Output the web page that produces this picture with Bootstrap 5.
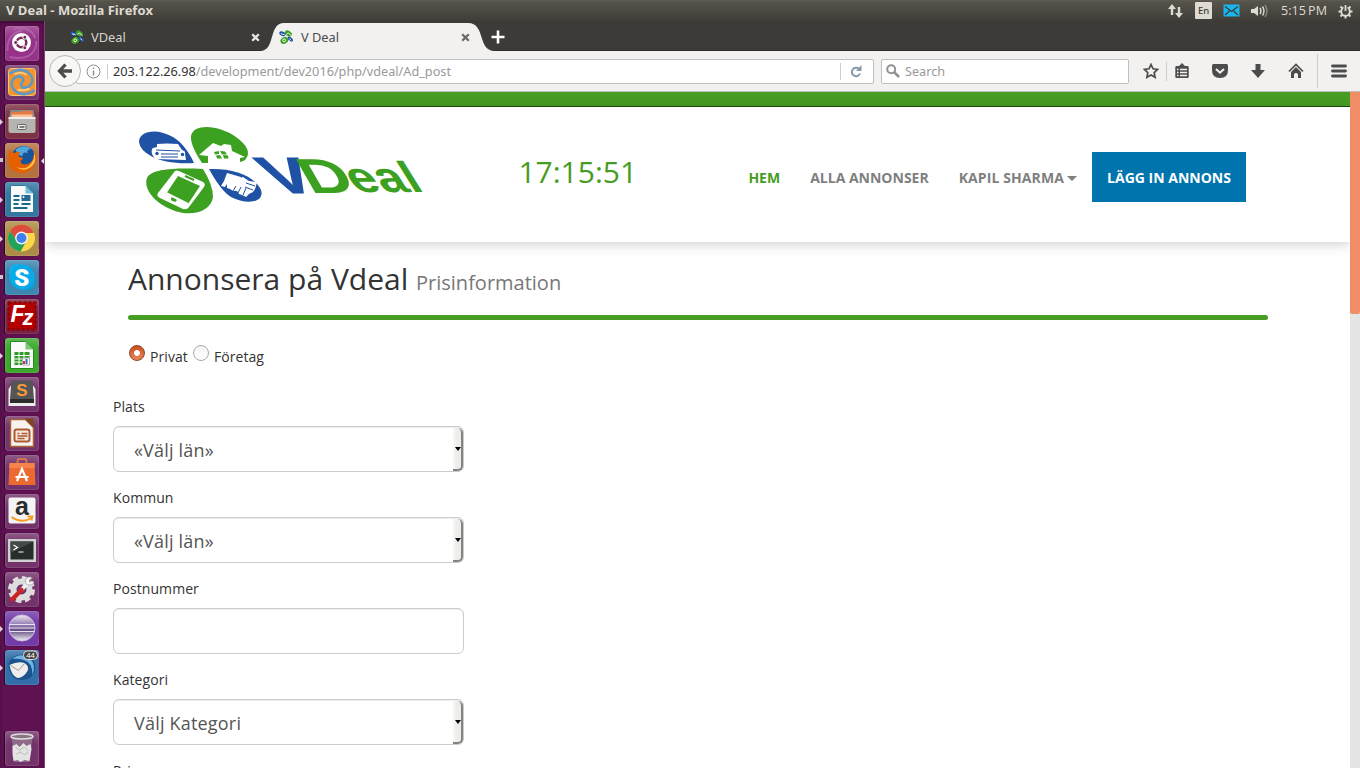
<!DOCTYPE html>
<html lang="sv">
<head>
<meta charset="utf-8">
<title>V Deal</title>
<link rel="stylesheet" href="https://cdn.jsdelivr.net/npm/bootstrap@5.3.0/dist/css/bootstrap.min.css">
<script src="https://cdn.jsdelivr.net/npm/bootstrap@5.3.0/dist/js/bootstrap.bundle.min.js"></script>
<style>
html,body{height:768px;overflow:hidden}
body{font-family:"Open Sans","Noto Sans",sans-serif;font-size:14px;line-height:20px;color:#333;background:#fff}
svg{display:block;flex:none}
.syspanel{height:21px;background:linear-gradient(#5e5b50 0,#55534a 2px,#3e3d38 100%);color:#dfdbd2;font-size:12.6px;line-height:20px}
.wintitle{font-weight:700;font-size:13px;padding-left:6px}
.indicators{padding-right:7px}
.desk{height:747px}
.launcher{width:45px;background:#5f1152;border-right:1px solid #7f4574;padding:5px 0 2px 5px;box-shadow:inset 0 3px 4px -1px #3d0934}
.launcher>.lt{width:34px;height:35px;margin-bottom:4px;border-radius:3px;position:relative;box-shadow:inset 0 0 0 1px #ffffff1a,inset 0 9px 9px -4px #ffffff38,-1px 0 1px #2a0624;background:#73336a}
.launcher>.lt.mt-auto{margin-bottom:0}
.lt>svg{width:34px;height:35px}
.run::before{content:"";position:absolute;left:-5px;top:15px;border:3px solid transparent;border-left-color:#dcd2da;border-right:0}
.runs::before{content:"";position:absolute;left:-5px;top:15px;width:3px;height:4px;background:#cfc4cd}
.run::after,.runs::after{content:"";position:absolute;right:0;top:8px;width:1px;height:20px;background:#0003}
.foc::after{right:-5px;top:15px;width:0;height:0;background:none;border:3px solid transparent;border-right-color:#e8e0e6;border-left:0}
.t-dash{background:#96328a!important}.t-files{background:#7d3144!important}.t-fox{background:#b4723f!important}.t-writer{background:#3477a0!important}.t-chrome{background:#ad8c47!important}.t-skype{background:#3c86b0!important}.t-fz{background:#7a2040!important}.t-calc{background:#3ba82c!important}.t-ecl{background:#723ba8!important}.t-bird{background:#316eaa!important}
.browser{width:1315px;font-family:"Noto Sans","Open Sans",sans-serif}
.tabstrip{height:30px;background:#3c3b37;border-bottom:1px solid #2b2d2e;font-size:12.8px;line-height:30px}
.tabone{width:215px;padding:3px 0 0 25px;color:#d7d3cc}
.tabtwo{width:234px;padding:3px 16px 0 19px;position:relative;color:#4c4c4c}
.tabtwo .shape{position:absolute;left:0;top:1px}
.tabtwo>*{position:relative}
.urlrow{height:41px;background:#f2f1f0;border-bottom:1px solid #c2c0bd}
.backbtn{width:32px;height:32px;border:1px solid #b8b6b3;border-radius:50%;background:#f7f7f6;z-index:2}
.urlbox{height:25px;width:798px;margin-left:-5px;border:1px solid #c1bfbc;border-radius:2px;background:#fff;font-size:12.7px;color:#999}
.urlbox b{font-weight:400;color:#333}
.urltext,.findbox span{padding-bottom:1px}
.findbox{width:248px;height:25px;border:1px solid #c1bfbc;border-radius:2px;background:#fff;font-size:12.67px;color:#999;margin-left:7px}
.vline{width:1px;background:#cfcdcb;height:19px}
.page{height:676px;overflow:hidden;font-family:"Open Sans",sans-serif}
.sitewrap{width:1305px;overflow:hidden}
.greenbar{height:15px;background:#479c23;border-bottom:1px solid #1d4a0c}
.sitehead{height:135px;box-shadow:0 2px 12px #0003;background:#fff;position:relative;padding-right:104px}
.clocktext{font-size:30px;line-height:40px;color:#479c23;margin-top:45px;width:230px}
.sitenav{margin-top:45px;font-weight:700;color:#7f7f7f}
.sitenav a{color:#7f7f7f;text-decoration:none;padding:16px 0 14px;white-space:nowrap}
.sitenav a:nth-child(3){letter-spacing:.1px}
.sitenav .cur{color:#479c23}
.sitenav .cta{background:#0074ad;color:#fff;width:154px;text-align:center;height:50px}
.caretdn{display:inline-block;border:5px solid transparent;border-top-color:#7f7f7f;border-bottom:0;vertical-align:middle;margin-left:3px;margin-bottom:1px}
.sitebody{padding:20px 83px 0 68px}
h1{font-size:30px;line-height:33px;font-weight:400;margin:0 0 20px 15px;color:#333;height:33px}
h1 small{font-size:20px;line-height:20px;color:#777}
.ruleline{height:5px;border-radius:3px;background:#479c23;width:1140px;margin-left:15px}
.kinds{margin:24px 0 0 15px;height:30px}
.kinds .form-check-input{width:16px;height:16px;margin:1px 5px 0 1px;border:1px solid #a9a9a9;background:linear-gradient(#f3f3f3,#fff)}
.kinds .form-check-input:checked{background:radial-gradient(circle,#fff 0 2.6px,transparent 3.3px),linear-gradient(#cb4e20,#ea8459);border-color:#8e452b}
.kinds label{margin-top:3px;margin-right:4px;letter-spacing:.07px}
.fields{width:351px;margin-top:23px}
.fields label{display:block;margin-bottom:9px;letter-spacing:.07px}
.fields .form-control{height:46px;border:1px solid #ccc;border-radius:6px;padding:10px 20px;font-size:18px;line-height:26px;color:#555;background:#fff;box-shadow:inset 0 1px 1px #00000013;margin-bottom:16px;appearance:none;letter-spacing:.2px}
.pick{position:relative}
.pick::before{content:"";position:absolute;right:1px;top:2px;width:10px;height:43px;background:linear-gradient(90deg,#fafafa,#ededeb 40%);border-right:2px solid #858380;border-bottom:2px solid #858380;border-radius:0 5px 5px 0}
.pick::after{content:"";position:absolute;right:3px;top:21px;border:3px solid transparent;border-top:4px solid #000;border-bottom:0}
.sbar{width:10px;background:#e5e5e5}
.sbar div{height:222px;background:#f08c66;border-radius:0 0 2px 2px}
</style>
</head>
<body>
<svg width="0" height="0" class="position-absolute"><defs>
<symbol id="fav" viewBox="0 0 16 16"><ellipse cx="3.7" cy="4" rx="3.6" ry="2.3" transform="rotate(24 3.7 4)" fill="#1f52a5"/><path d="M2 4l4 1" stroke="#fff"/><ellipse cx="10" cy="3.7" rx="4" ry="2.8" transform="rotate(30 10 3.7)" fill="#3c9f20"/><path d="M8 5l2-2 3 3" stroke="#fff" fill="none"/><ellipse cx="5.5" cy="11.2" rx="4.2" ry="3.5" transform="rotate(-30 5.5 11)" fill="#3c9f20"/><circle cx="5.5" cy="11" r="1.5" fill="none" stroke="#fff"/><ellipse cx="12" cy="9.7" rx="3.5" ry="1.8" transform="rotate(42 12 9.7)" fill="#1f52a5"/><path d="M11 9l2 2" stroke="#fff"/></symbol>
</defs></svg>
<header class="syspanel d-flex justify-content-between">
 <span class="wintitle">V Deal - Mozilla Firefox</span>
 <div class="indicators d-flex align-items-center">
  <svg width="16" height="16" viewBox="0 0 16 16" fill="#dfdbd2"><path d="M0 6l4-5 4 5H5.2v6H2.8V6zM7 10h2.8V4h2.4v6H15l-4 5z"/></svg>
  <svg width="17" height="17" viewBox="0 0 17 17" style="margin-left:11px"><rect width="17" height="17" rx="1" fill="#dfdbd2"/><text x="8.5" y="12" font-size="9.5" text-anchor="middle" fill="#3c3b37" font-family="Noto Sans" font-weight="500">En</text></svg>
  <svg width="17" height="13" viewBox="0 0 17 13" style="margin-left:11px"><rect x=".5" y=".5" width="16" height="12" fill="#19b6ee"/><path d="M2 2.5l6.500 5 6.500-5M2 11l4.500-4M15 11l-4.500-4" stroke="#3c3b37" stroke-width="1.300" fill="none"/></svg>
  <svg width="17" height="16" viewBox="0 0 17 16" style="margin-left:11px" fill="none" stroke="#dfdbd2" stroke-width="1.400"><path d="M0 6h3l4-3v10L3 10H0z" fill="#dfdbd2" stroke="none"/><path d="M9 5q2 3 0 6M11.500 3.500q3 4.500 0 9"/><path d="M14 2q4 6 0 12" stroke="#8b8981"/></svg>
  <span style="margin-left:13px">5:15&#8201;PM</span>
  <svg width="15" height="16" viewBox="0 0 15 16" style="margin-left:11px" fill="none" stroke="#dfdbd2"><circle cx="7.500" cy="8.500" r="4.300" stroke-width="1.900"/><path d="M7.500 1v7" stroke="#4a4943" stroke-width="4"/><path d="M7.500 2v6" stroke-width="1.800"/><path d="M.5 8.500H3M12 8.500h2.500M2.500 3.500l2 2M12.500 3.500l-2 2M2.500 13.500l2-2M12.500 13.500l-2-2M7.500 13v2.500" stroke-width="1.900"/></svg>
 </div>
</header>
<div class="desk d-flex">
<aside class="launcher d-flex flex-column flex-shrink-0">
 <div class="lt t-dash"><svg viewBox="0 0 33 35"><path d="M2 25Q1 8 17 4M4 31Q30 36 31 15M8 3Q24-1 30 12" fill="none" stroke="#bb77b2" stroke-width="2" opacity=".6"/><circle cx="16" cy="16.500" r="9.500" fill="#fff"/><circle cx="16" cy="16.500" r="4.800" fill="none" stroke="#772953" stroke-width="2.400"/><g stroke="#fff" fill="#772953"><circle cx="10.200" cy="16.500" r="2"/><circle cx="19.300" cy="11.200" r="2"/><circle cx="19.300" cy="21.800" r="2"/></g></svg></div>
 <div class="lt"><svg viewBox="0 0 33 35"><rect x="3" y="3.500" width="27" height="27" rx="3" fill="#f2932e" stroke="#ffc36c"/><path d="M4 9Q13 2 22 7q8 6 3 13-4 4-8 2-3-3 0-5" fill="none" stroke="#5e98c7" stroke-width="2.600"/><path d="M29 25q-9 7-18 2-8-6-3-13 4-4 8-2 3 3 1 5" fill="none" stroke="#5e98c7" stroke-width="2.600"/><path d="M9 9q8-3 12 1M12 24.500q6 2 12-1" stroke="#ffd58c" fill="none" stroke-width="1.500"/></svg></div>
 <div class="lt run t-files"><svg viewBox="0 0 33 35"><path d="M5 6h23l1.500 8H3.500z" fill="#8a8784"/><path d="M6 8h9l2-1h10v7H6z" fill="#e57a42"/><path d="M6 10.500h21V14H6z" fill="#f9c09a"/><rect x="3" y="13" width="27" height="16" rx="2" fill="#b5b4b1"/><path d="M3 14h27" stroke="#eee" stroke-width="2"/><rect x="12" y="20.500" width="8.500" height="5" rx="1" fill="#eee" stroke="#666"/><path d="M14 23h5" stroke="#555" stroke-width="1.500"/></svg></div>
 <div class="lt runs foc t-fox"><svg viewBox="0 0 33 35"><circle cx="18" cy="15" r="12" fill="#16549c"/><path d="M10 7q8-7 16-1-5 0-4 4-5-2-5 3-4 0-7-6" fill="#4fa9dd"/><path d="M4 7q2 3 5 3 3-2 6-1-3 3-1 5l4 1-3 3q1 5 7 3 6-2 6-9 3 4-1 9 4-5 2-14 4 6 0 14-4 9-13 9Q3 29 3 16q-1-5 1-9" fill="#e66000"/><path d="M28 8q5 11-4 17-7 4-13-1 10 4 15-4 4-5 2-12" fill="#ffc34b"/></svg></div>
 <div class="lt run t-writer"><svg viewBox="0 0 33 35"><path d="M5 3.500h15l8 8v19H5z" fill="#fafafa" stroke="#287d9d"/><path d="M20 3.500v8h8z" fill="#75bcd7"/><path d="M8 14h6M8 18h6M8 22h5M8 26h14M16 22h9" stroke="#176987" stroke-width="2"/><rect x="16" y="13" width="9" height="6" fill="#236b94"/><circle cx="18" cy="15" r="1" fill="#fff"/></svg></div>
 <div class="lt run t-chrome"><svg viewBox="0 0 33 35"><circle cx="16" cy="17" r="13.500" fill="#fdd64a"/><path d="M4.300 10.200A13.500 13.500 0 0 1 27.700 10.200L28 12H16l-5.500 7z" fill="#dd4b3e"/><path d="M4.300 10.200A13.500 13.500 0 0 0 15 30.500l6-10.500-10-1z" fill="#22a35b"/><circle cx="16" cy="17" r="6.400" fill="#f6f6f6"/><circle cx="16" cy="17" r="5" fill="#427fec"/></svg></div>
 <div class="lt runs t-skype"><svg viewBox="0 0 33 35"><circle cx="11.500" cy="12" r="8" fill="#16afe9"/><circle cx="21.500" cy="22" r="8" fill="#08a0df"/><circle cx="16.500" cy="17" r="12.500" fill="#09aae8"/><text x="16.300" y="25.500" text-anchor="middle" font-family="Roboto" font-size="24" font-weight="900" fill="#fff">S</text></svg></div>
 <div class="lt t-fz"><svg viewBox="0 0 33 35"><rect x="3" y="3.500" width="27" height="27" fill="#b50000" stroke="#8b0000" stroke-width="2" stroke-dasharray="3 2"/><text x="5" y="23" font-family="Liberation Sans" font-size="23" font-weight="700" font-style="italic" fill="#fff" letter-spacing="-2">F<tspan dy="3" font-size="22">z</tspan></text></svg></div>
 <div class="lt run t-calc"><svg viewBox="0 0 33 35"><path d="M5 3.500h15l8 8v19H5z" fill="#fafafa" stroke="#258b1f"/><path d="M20 3.500v8h8z" fill="#7fc873"/><path d="M9 14h15v13H9z" fill="#2c9b27"/><path d="M9 17.500h15M9 21h15M9 24h15M13.500 14v13M18.500 14v13" stroke="#fff"/><rect x="17" y="20" width="7" height="7" fill="#fff" stroke="#aaa"/><path d="M18.500 26v-3" stroke="#c33" stroke-width="2"/><path d="M21 26v-5" stroke="#36c" stroke-width="2"/></svg></div>
 <div class="lt"><svg viewBox="0 0 33 35"><path d="M5 9L3 12v17h27V12l-2-3z" fill="#ececec"/><path d="M6 3.500h21l1.500 19h-24z" fill="#555"/><path d="M4.500 22h24v4h-24z" fill="#2c2c2c"/><text x="16.500" y="19" text-anchor="middle" font-family="Liberation Sans" font-size="17" font-weight="700" fill="#f79a3c">S</text></svg></div>
 <div class="lt"><svg viewBox="0 0 33 35"><path d="M5 3.500h15l8 8v19H5z" fill="#f6f3f0" stroke="#a86035" stroke-width="1.500"/><path d="M19 2.500l9 9v-9z" fill="#81451f"/><rect x="9" y="13.500" width="15" height="12" rx="2" fill="#f6e7dd" stroke="#ad5a30" stroke-width="2"/><path d="M12 17.500h2M16 17.500h6M12 20h10M12 22.500h7" stroke="#ad5a30" stroke-width="1.300"/></svg></div>
 <div class="lt"><svg viewBox="0 0 33 35"><path d="M12 11V6q0-2 2-2h5q2 0 2 2v5" fill="none" stroke="#d57450" stroke-width="2"/><path d="M4 8h25l1 22H3z" fill="#ec6a31"/><path d="M4 8h25l.3 5H3.700z" fill="#f4844c"/><path d="M11.500 26l5-12 5 12M10 22h13" fill="none" stroke="#fff" stroke-width="2.200"/></svg></div>
 <div class="lt"><svg viewBox="0 0 33 35"><rect x="3" y="3.500" width="27" height="26" rx="2" fill="#f4f4f4"/><text x="16.500" y="21" text-anchor="middle" font-family="Liberation Sans" font-size="25" font-weight="700" fill="#2c2c2c">a</text><path d="M6 23q10 7 20 1M22 22.500h5l-1 4" fill="none" stroke="#f79a20" stroke-width="1.800"/></svg></div>
 <div class="lt"><svg viewBox="0 0 33 35"><rect x="2.500" y="6" width="28" height="23" fill="#d1d1d1"/><rect x="5" y="8.500" width="23" height="18" fill="#272d2a"/><path d="M5 8.500h23L5 20z" fill="#444b47"/><path d="M8 12l4 2.500L8 17M13 19h5" fill="none" stroke="#fff" stroke-width="1.200"/></svg></div>
 <div class="lt"><svg viewBox="0 0 33 35"><circle cx="16" cy="17.500" r="8" fill="none" stroke="#ddd" stroke-width="6"/><circle cx="16" cy="17.500" r="11.500" fill="none" stroke="#ddd" stroke-width="4" stroke-dasharray="5.500 3.530"/><path d="M15 19l7-8" stroke="#eee" stroke-width="4"/><path d="M27 6q-5-3-7 2-1 5 4 5 5 0 4-4l-4 1v-2z" fill="#f4f4f4" stroke="#999" stroke-width=".7"/><path d="M6.500 27.500L16 18" stroke="#c82626" stroke-width="4.500" stroke-linecap="round"/></svg></div>
 <div class="lt run t-ecl"><svg viewBox="0 0 33 35"><defs><linearGradient id="ecl" x2="0" y2="1"><stop stop-color="#efeaf4"/><stop offset=".35" stop-color="#9681b4"/><stop offset=".6" stop-color="#665084"/><stop offset="1" stop-color="#f4f1f8"/></linearGradient></defs><circle cx="16.500" cy="17" r="13" fill="url(#ecl)" stroke="#c9bddb"/><path d="M3.500 13.500h26M3.500 17h26M4 20.500h25" stroke="#e7e0f1" stroke-width="1.200"/></svg></div>
 <div class="lt run t-bird"><svg viewBox="0 0 33 35"><path d="M4 20Q0 9 13 5q12-3 16 8 3 11-7 16Q7 33 4 20" fill="#1d538d"/><path d="M7 9q8-7 17-1 7 7 3 17 0-13-9-15-5-2-11-1" fill="#6eb3e3"/><path d="M4 15q8-4 15-2 5 3 3 8-4 7-10 7-6-2-8-13z" fill="#eee"/><path d="M5 15.500l8 5 6-7" fill="none" stroke="#ac9c8b"/><rect x="18" y="1" width="14" height="8.500" rx="4" fill="#444" stroke="#ddd"/><text x="25" y="8" font-size="7.500" font-family="Noto Sans" text-anchor="middle" fill="#fff">44</text></svg></div>
 <div class="lt mt-auto"><svg viewBox="0 0 33 35"><path d="M6 6h21l-3 25H9z" fill="#a79fa5" opacity=".5"/><ellipse cx="16.500" cy="5.500" rx="11" ry="2.500" fill="#887582" stroke="#e1dce0" stroke-width="1.500"/><path d="M7 15l4-2 3 3 4-4 3 3 4-2 1 5-2 12-5-1-4 2-3-2-4 1-1-7z" fill="#e4e4e4"/><path d="M10 16l4 3 5-3 4 4M11 23l4-2 4 3 4-3" stroke="#bbb" fill="none"/></svg></div>
</aside>
<main class="browser">
 <div class="tabstrip d-flex">
  <div class="tabone d-flex align-items-center"><svg width="15" height="15"><use href="#fav"/></svg><span style="margin-left:6px">VDeal</span><svg class="ms-auto" width="9" height="9" viewBox="0 0 9 9"><path d="M1.200 1.200l6.600 6.600M7.800 1.200L1.200 7.800" stroke="#e8e6e2" stroke-width="2.300"/></svg></div>
  <div class="tabtwo d-flex align-items-center"><svg class="shape" width="236" height="29" viewBox="0 0 236 29"><path d="M0 29C16 29 8 1 24 1H208C226 1 217 29 235 29z" fill="#f2f1f0"/></svg><svg width="15" height="15"><use href="#fav"/></svg><span style="margin-left:7px">V Deal</span><svg class="ms-auto" style="margin-right:8px" width="9" height="9" viewBox="0 0 9 9"><path d="M1.200 1.200l6.600 6.600M7.800 1.200L1.200 7.800" stroke="#6b6b66" stroke-width="2.300"/></svg></div>
  <svg width="14" height="14" viewBox="0 0 14 14" style="margin:9px 0 0 -3px"><path d="M7 .5v13M.5 7h13" stroke="#fff" stroke-width="2.600"/></svg>
 </div>
 <div class="urlrow d-flex align-items-center">
  <div class="backbtn d-flex align-items-center justify-content-center ms-1 flex-shrink-0"><svg width="16" height="16" viewBox="0 0 16 16"><path d="M8.500 1.500L2.500 8l6 6.500M3 8h12" stroke="#4c4c4c" stroke-width="3.300" fill="none"/></svg></div>
  <div class="urlbox d-flex align-items-center flex-shrink-0">
   <svg style="margin-left:9px" width="15" height="15" viewBox="0 0 15 15"><circle cx="7.500" cy="7.500" r="6.500" fill="none" stroke="#8b8b8b"/><path d="M7.500 6.500v5M7.500 3.500v1.500" stroke="#8b8b8b" stroke-width="1.400"/></svg>
   <div class="vline" style="margin:0 5px 0 6px;height:15px"></div>
   <span class="urltext"><b>203.122.26.98</b>/development/dev2016/php/vdeal/Ad_post</span>
   <div class="vline ms-auto" style="height:17px"></div>
   <svg style="margin:0 11px 0 9px" width="12" height="13" viewBox="0 0 12 13"><path d="M9 4A4.200 4.200 0 1 0 10 8.500" fill="none" stroke="#8899a8" stroke-width="2"/><path d="M11.500 0v6H6z" fill="#8899a8"/></svg>
  </div>
  <div class="findbox d-flex align-items-center flex-shrink-0"><svg style="margin-left:4px" width="14" height="14" viewBox="0 0 14 14"><circle cx="5.200" cy="5.200" r="4" fill="none" stroke="#929292" stroke-width="2"/><path d="M8 8l5 5" stroke="#929292" stroke-width="2.500"/></svg><span style="margin-left:5px">Search</span></div>
  <svg style="margin-left:14px" width="16" height="16" viewBox="0 0 16 16"><path d="M8 1.500l2 4.300 4.700.6-3.500 3.200.9 4.700L8 12l-4.100 2.300.9-4.700L1.300 6.400 6 5.800z" fill="none" stroke="#4c4c4c" stroke-width="1.700"/></svg>
  <div class="vline" style="margin-left:7px"></div>
  <svg style="margin-left:7px" width="16" height="16" viewBox="0 0 16 16"><path d="M2.500 3h11q1.200 0 1.200 1.200v9.600q0 1.200-1.200 1.200h-11q-1.200 0-1.200-1.200V4.200Q1.300 3 2.500 3M5 3l3-3 3 3z" fill="#4c4c4c"/><path d="M3 6.500h1.500M6 6.500h7M3 9.500h1.500M6 9.500h7M3 12.500h1.500M6 12.500h7" stroke="#f2f1f0" stroke-width="1.500"/></svg>
  <svg style="margin-left:21px" width="18" height="16" viewBox="0 0 18 16"><path d="M2.500 1h13q1.500 0 1.500 1.500V7q0 8-8 8T1 7V2.500Q1 1 2.500 1" fill="#4c4c4c"/><path d="M5 6l4 3.700L13 6" fill="none" stroke="#f2f1f0" stroke-width="2"/></svg>
  <svg style="margin-left:21px" width="16" height="16" viewBox="0 0 16 16"><path d="M5.500 1h5v6H15l-7 8-7-8h4.500z" fill="#4c4c4c"/></svg>
  <svg style="margin-left:22px" width="16" height="16" viewBox="0 0 16 16"><path d="M1 8.500l7-7 7 7" fill="none" stroke="#4c4c4c" stroke-width="1.700"/><path d="M3 9l5-5 5 5v6h-3v-4q-2-2-4 0v4H3z" fill="#4c4c4c"/></svg>
  <div class="vline" style="margin-left:13px;height:34px"></div>
  <svg style="margin-left:13px" width="16" height="14" viewBox="0 0 16 14"><path d="M1.500 2h13M1.500 7h13M1.500 12h13" stroke="#4c4c4c" stroke-width="2.800" stroke-linecap="round"/></svg>
 </div>
 <div class="page d-flex">
  <div class="sitewrap">
   <div class="greenbar"></div>
   <div class="sitehead d-flex align-items-start">
    <svg width="300" height="110" viewBox="0 0 300 110" style="margin:8px 0 0 85px">
     <g>
      <path d="M9 27C9 15 28 13 43 22C53 28 60 39 64 48C48 49 31 47 21 41Q10 35 9 27" fill="#1f52a5"/>
      <path d="M27 29q10-1 21 0l4 6q4 1 3 4l1 6-31-1-3-5q-1-5 1-6l4-1z" fill="#fff"/><path d="M26 35l24 1M31 39h17M31 42h17" stroke="#1f52a5" stroke-width="1.100"/><circle cx="27" cy="38.500" r="1.700" fill="#1f52a5"/><circle cx="52.500" cy="39.500" r="1.700" fill="#1f52a5"/>
      <path d="M72 48Q60 30 61 21C64 7 91 11 106 22Q124 35 115 45Q111 48 100 48z" fill="#3ca021"/>
      <path d="M69 40l14-12 8 3 3-2 7 1 1 6 13 6-5 1v6H78V41z" fill="#fff"/><path d="M84 37l5-1v3l-4 .5zM90 36l5 .5 2 3h-5zM86 40.500l4-.5 2 3.500h-5zM93 40l5 .5.500 3H94z" fill="#3ca021"/>
      <path d="M73 54Q83 70 83 82C81 96 63 102 45 96C25 89 13 74 17 63C22 53 49 53 73 54" fill="#3ca021"/>
      <path d="M45 56q2-1 4 0l24 11q3 2 1 5L59 92q-2 3-6 2L30 83q-4-2-2-5z" fill="#fff"/><path d="M48 61l22 10-12 18-22-10z" fill="#3ca021"/><path d="M55 61l9 4" stroke="#3ca021" stroke-width="2"/><ellipse cx="44" cy="84.500" rx="3" ry="2" fill="#3ca021" transform="rotate(20 44 84)"/><path d="M36 78l22 11" stroke="#fff" stroke-width="2"/>
      <path d="M79 54C102 53 124 60 131 75C135 88 116 90 101 82Q91 76 79 54" fill="#1f52a5"/>
      <path d="M97 58l14 4-3 9-11-2-2 3-4-1 3-5z" fill="#fff"/><path d="M97 67l16-5 6 4 8 1-1 4-1 3-2 3-4 2-3 3-4-2-3-1-2-3-4 0-3-2-3-1z" fill="#fff"/><path d="M103 76l3-5M108 78l3-6M113 80l3-7M116 68l9 3M115 72l8 3" stroke="#1f52a5" stroke-width="1" fill="none"/>
     </g>
     <g font-family="Liberation Sans" font-weight="700">
      <text transform="translate(145 78) skewX(33)" font-size="51" fill="#1f52a5" stroke="#1f52a5" textLength="46" lengthAdjust="spacingAndGlyphs">V</text>
      <text transform="translate(181 78) skewX(30)" font-size="49" fill="#3ca021" textLength="48" lengthAdjust="spacingAndGlyphs">D</text>
      <text transform="translate(226 76.500) skewX(32)" font-size="43" fill="#3ca021" textLength="70" lengthAdjust="spacingAndGlyphs">eal</text>
     </g>
    </svg>
    <div class="clocktext ms-auto">17:15:51</div>
    <nav class="sitenav d-flex">
     <a class="cur" href="#">HEM</a><a href="#" style="margin-left:30px">ALLA ANNONSER</a><a href="#" style="margin-left:30px">KAPIL SHARMA<span class="caretdn"></span></a><a class="cta" href="#" style="margin-left:15px">LÄGG IN ANNONS</a>
    </nav>
   </div>
   <div class="sitebody">
    <h1>Annonsera på Vdeal <small>Prisinformation</small></h1>
    <div class="ruleline"></div>
    <div class="kinds d-flex align-items-start">
     <input class="form-check-input" type="radio" name="k" id="k1" checked><label for="k1">Privat</label>
     <input class="form-check-input" type="radio" name="k" id="k2"><label for="k2">Företag</label>
    </div>
    <form class="fields">
     <label>Plats</label><div class="pick"><select class="form-control"><option>«Välj län»</option></select></div>
     <label>Kommun</label><div class="pick"><select class="form-control"><option>«Välj län»</option></select></div>
     <label>Postnummer</label><input class="form-control" type="text">
     <label>Kategori</label><div class="pick"><select class="form-control"><option>Välj Kategori</option></select></div>
     <label>Pris</label>
    </form>
   </div>
  </div>
  <div class="sbar"><div></div></div>
 </div>
</main>
</div>
</body>
</html>
